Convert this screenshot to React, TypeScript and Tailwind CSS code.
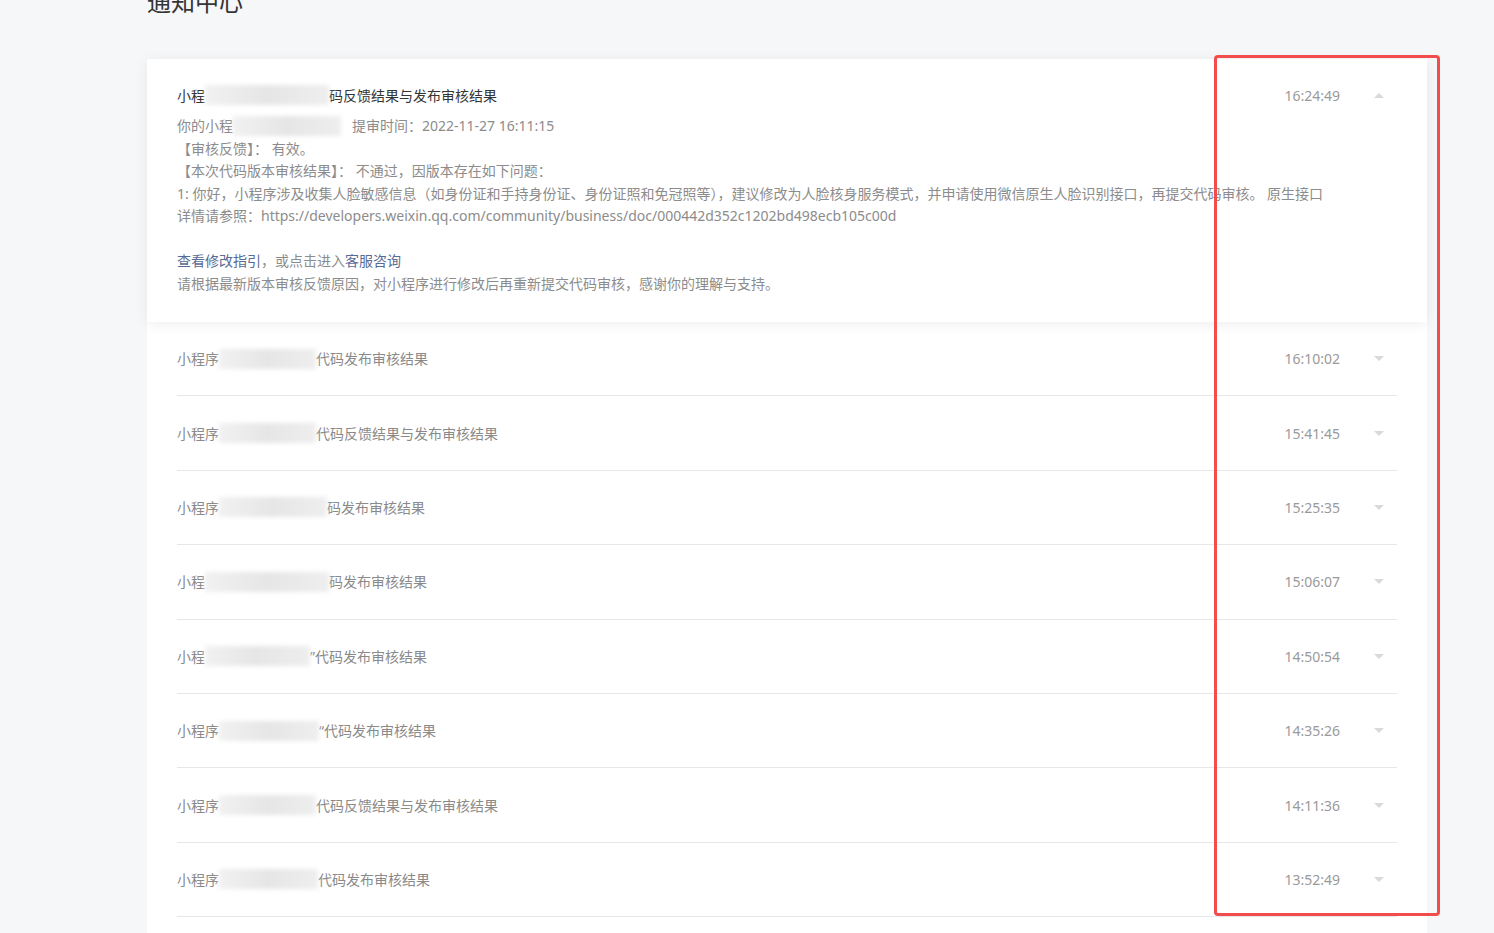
import React from "react";

type Row = {
  prefix: string;
  blank: number;
  suffix: string;
  time: string;
};

const rows: Row[] = [
  { prefix: "小程序", blank: 97, suffix: "代码发布审核结果", time: "16:10:02" },
  { prefix: "小程序", blank: 97, suffix: "代码反馈结果与发布审核结果", time: "15:41:45" },
  { prefix: "小程序", blank: 108, suffix: "码发布审核结果", time: "15:25:35" },
  { prefix: "小程", blank: 124, suffix: "码发布审核结果", time: "15:06:07" },
  { prefix: "小程", blank: 105, suffix: "\u201d代码发布审核结果", time: "14:50:54" },
  { prefix: "小程序", blank: 100, suffix: "\u201c代码发布审核结果", time: "14:35:26" },
  { prefix: "小程序", blank: 97, suffix: "代码反馈结果与发布审核结果", time: "14:11:36" },
  { prefix: "小程序", blank: 99, suffix: "代码发布审核结果", time: "13:52:49" },
];

// 打码区域（模糊的灰块）
function Blur({ w }: { w: number }) {
  return (
    <span
      className="inline-block h-[20px] align-middle bg-gradient-to-r from-[#f1f1f1] via-[#e6e6e6] to-[#eeeeee] blur-[2px]"
      style={{ width: w }}
    />
  );
}

function Caret({ up }: { up?: boolean }) {
  return (
    <div className="w-[57px] flex justify-end pr-[13px]">
      {up ? (
        <span className="w-0 h-0 border-l-[5px] border-r-[5px] border-b-[5px] border-l-transparent border-r-transparent border-b-[#d9d9d9]" />
      ) : (
        <span className="w-0 h-0 border-l-[5px] border-r-[5px] border-t-[5px] border-l-transparent border-r-transparent border-t-[#d9d9d9]" />
      )}
    </div>
  );
}

export default function App() {
  return (
    <div
      className="relative flex flex-col h-[933px] overflow-hidden bg-[#f6f7f9] pl-[147px] pr-[67px]"
      style={{ fontFamily: '"Noto Sans", "Noto Sans CJK SC", sans-serif' }}
    >
      <h1 className="-mt-[14px] h-[32px] leading-[32px] text-[24px] font-normal text-[#353535]">
        通知中心
      </h1>

      <div className="mt-[41px] flex-1 bg-white">
        {/* 展开的通知 */}
        <div className="relative z-10 bg-white px-[30px] pt-[26px] pb-[27px] shadow-[0_2px_12px_rgba(0,0,0,0.07)]">
          <div className="flex items-center h-[20px]">
            <div className="flex-1 flex items-center text-[14px] text-[#353535]">
              <span>小程</span>
              <Blur w={124} />
              <span>码反馈结果与发布审核结果</span>
            </div>
            <span className="text-[14px] text-[#9a9a9a]">16:24:49</span>
            <Caret up />
          </div>
          <div className="mt-[10px] text-[14px] leading-[22.5px] text-[#8c8c8c]">
            <div className="flex items-center">
              <span>你的小程</span>
              <Blur w={108} />
              <span className="ml-[11px]">提审时间：2022-11-27 16:11:15</span>
            </div>
            <div>【审核反馈】： 有效。</div>
            <div>【本次代码版本审核结果】： 不通过，因版本存在如下问题：</div>
            <div>
              1: 你好，小程序涉及收集人脸敏感信息（如身份证和手持身份证、身份证照和免冠照等），建议修改为人脸核身服务模式，并申请使用微信原生人脸识别接口，再提交代码审核。 原生接口
            </div>
            <div>
              详情请参照：https://developers.weixin.qq.com/community/business/doc/000442d352c1202bd498ecb105c00d
            </div>
            <div className="h-[22.5px]" />
            <div>
              <span className="text-[#576b95]">查看修改指引</span>，或点击进入
              <span className="text-[#576b95]">客服咨询</span>
            </div>
            <div>请根据最新版本审核反馈原因，对小程序进行修改后再重新提交代码审核，感谢你的理解与支持。</div>
          </div>
        </div>

        {/* 折叠的通知列表 */}
        <div className="px-[30px]">
          {rows.map((r) => (
            <div
              key={r.time}
              className="flex items-center h-[74.4px] border-b border-[#e7e7e7]"
            >
              <div className="flex-1 flex items-center text-[14px] text-[#8a8a8a]">
                <span>{r.prefix}</span>
                <Blur w={r.blank} />
                <span>{r.suffix}</span>
              </div>
              <span className="text-[14px] text-[#9a9a9a]">{r.time}</span>
              <Caret />
            </div>
          ))}
        </div>
      </div>

      {/* 标注框 */}
      <div className="absolute z-20 left-[1214px] top-[55px] w-[226px] h-[861px] rounded-[4px] border-[3px] border-[#f24c4c]" />
    </div>
  );
}
